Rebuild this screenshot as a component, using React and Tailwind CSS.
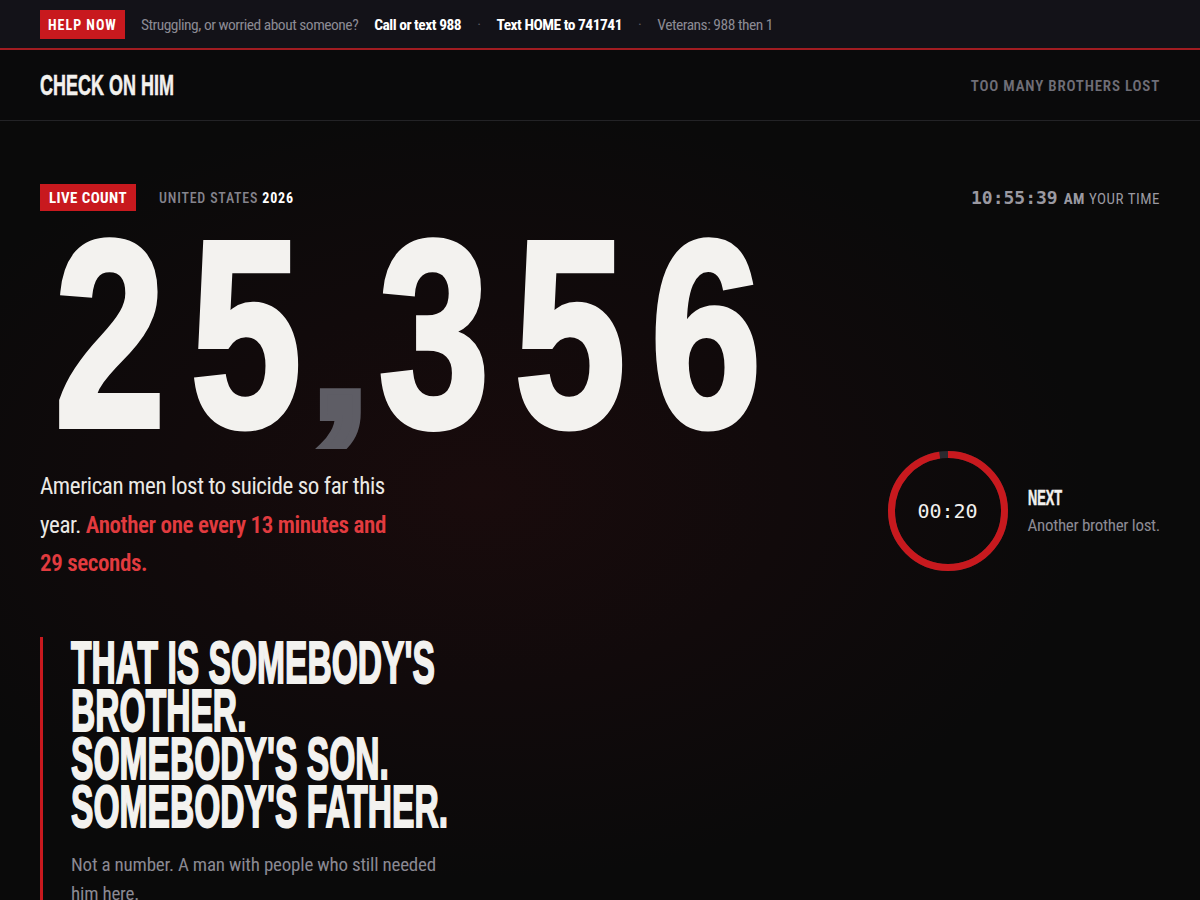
import React from "react";

const C = "font-['Roboto_Condensed','Liberation_Sans_Narrow','DejaVu_Sans_Condensed',sans-serif] font-stretch-condensed";
const D = "font-['Liberation_Sans',Arial,sans-serif] font-bold";

function Digit({ ch }) {
  return (
    <span className="w-[136px] flex justify-center">
      <span className="inline-block scale-x-[0.75]">{ch}</span>
    </span>
  );
}

function Line({ children }) {
  return (
    <div className="h-[48px] leading-[48px]">
      <span className="inline-block whitespace-nowrap origin-left scale-x-[0.56]">{children}</span>
    </div>
  );
}

export default function App() {
  return (
    <div className="min-h-[900px] bg-[#0a0a0a] text-white overflow-hidden">
      {/* crisis bar */}
      <div className={`h-[50px] bg-[#131218] border-b-2 border-[#a11c21] flex items-center gap-4 px-10 text-[15.5px] tracking-[-0.5px] ${C}`}>
        <span className="bg-[#c8191e] h-[29px] px-[8px] pt-[2px] flex items-center font-bold tracking-[1px] text-white text-[14px]">HELP NOW</span>
        <span className="pt-[4px] text-[#8b8a93]">Struggling, or worried about someone?</span>
        <span className="pt-[4px] font-bold text-white">Call or text 988</span>
        <span className="pt-[4px] text-[#5c5b63]">·</span>
        <span className="pt-[4px] font-bold text-white">Text HOME to 741741</span>
        <span className="pt-[4px] text-[#5c5b63]">·</span>
        <span className="pt-[4px] text-[#8b8a93]">Veterans: 988 then 1</span>
      </div>

      {/* header */}
      <div className="h-[71px] border-b border-[#232326] flex items-center justify-between px-10 bg-[#0a0a0b]">
        <div className={`${D} text-[30px] text-[#f2f1ee] w-[140px] leading-none [-webkit-text-stroke:0.6px_#f2f1ee]`}>
          <span className="inline-block whitespace-nowrap origin-left scale-x-[0.6]">CHECK ON HIM</span>
        </div>
        <span className={`${C} pt-[2px] text-[15px] font-semibold tracking-[0.8px] text-[#6f6e77]`}>TOO MANY BROTHERS LOST</span>
      </div>

      {/* main */}
      <main className="px-10 pt-[63px] pb-10 bg-[radial-gradient(ellipse_at_40%_45%,#190b0c_0%,#110a0b_30%,#0a0a0a_60%)]">
        <div className="flex items-center justify-between h-[27px]">
          <div className={`flex items-center gap-[23px] ${C}`}>
            <span className="bg-[#c8191e] h-[27px] px-[9px] pt-[1px] flex items-center font-bold text-[15px] tracking-[0.4px] text-white">LIVE COUNT</span>
            <span className="pt-[1px] text-[14px] tracking-[0.8px] text-[#85848d] font-medium">
              UNITED STATES <span className="text-white font-bold">2026</span>
            </span>
          </div>
          <div className="flex items-baseline gap-[6px] text-[#9a99a1]">
            <span className="font-['DejaVu_Sans_Mono',monospace] font-bold text-[18px]">10:55:39</span>
            <span className={`${C} text-[15px] tracking-[0.5px]`}>
              <span className="font-bold">AM</span> YOUR TIME
            </span>
          </div>
        </div>

        {/* big number */}
        <div className={`${D} h-[240px] flex items-baseline ml-[2px] text-[266px] leading-[246px] text-[#f3f2ef] [-webkit-text-stroke:6px_#f3f2ef]`}>
          <Digit ch="2" />
          <Digit ch="5" />
          <span className="w-[52px] flex justify-center text-[180px] text-[#5e5d65] [-webkit-text-stroke:6px_#5e5d65]">
            <span className="inline-block scale-x-[1.3] -translate-y-[8px]">,</span>
          </span>
          <Digit ch="3" />
          <Digit ch="5" />
          <Digit ch="6" />
        </div>

        {/* description + timer */}
        <div className="flex justify-between items-start">
          <p className={`${C} mt-[17px] text-[23px] tracking-[-0.4px] leading-[38.5px] text-[#ebe9e5]`}>
            American men lost to suicide so far this
            <br />
            year. <span className="text-[#e23b3f] font-semibold">Another one every 13 minutes and</span>
            <br />
            <span className="text-[#e23b3f] font-semibold">29 seconds.</span>
          </p>
          <div className="flex items-center gap-5">
            <div className="relative w-[120px] h-[120px]">
              <svg width="120" height="120" viewBox="0 0 120 120">
                <circle cx="60" cy="60" r="56.5" fill="none" stroke="#2a2a2f" strokeWidth="7" />
                <circle
                  cx="60"
                  cy="60"
                  r="56.5"
                  fill="none"
                  stroke="#c8191e"
                  strokeWidth="7"
                  strokeDasharray="355"
                  strokeDashoffset="9"
                  transform="rotate(-90 60 60)"
                />
              </svg>
              <div className="absolute inset-0 flex items-center justify-center font-['DejaVu_Sans_Mono',monospace] text-[20px] text-[#f2f1ee]">
                00:20
              </div>
            </div>
            <div className="flex flex-col">
              <div className={`${D} text-[22px] leading-[28px] w-[40px] text-[#f2f1ee] [-webkit-text-stroke:0.6px_#f2f1ee]`}>
                <span className="inline-block origin-left scale-x-[0.58]">NEXT</span>
              </div>
              <span className={`${C} text-[17px] tracking-[-0.3px] leading-[26px] text-[#8c8b94]`}>Another brother lost.</span>
            </div>
          </div>
        </div>

        {/* headline */}
        <div className="mt-[53px] border-l-[3px] border-[#c8191e] pl-[28px] pt-[2px]">
          <div className={`${D} text-[60px] text-[#f3f2ef] [-webkit-text-stroke:2px_#f3f2ef]`}>
            <Line>THAT IS SOMEBODY'S</Line>
            <Line>BROTHER.</Line>
            <Line>SOMEBODY'S SON.</Line>
            <Line>SOMEBODY'S FATHER.</Line>
          </div>
          <p className={`${C} mt-[19px] text-[19px] tracking-[-0.2px] leading-[29px] text-[#8a8993]`}>
            Not a number. A man with people who still needed
            <br />
            him here.
          </p>
        </div>
      </main>
    </div>
  );
}
